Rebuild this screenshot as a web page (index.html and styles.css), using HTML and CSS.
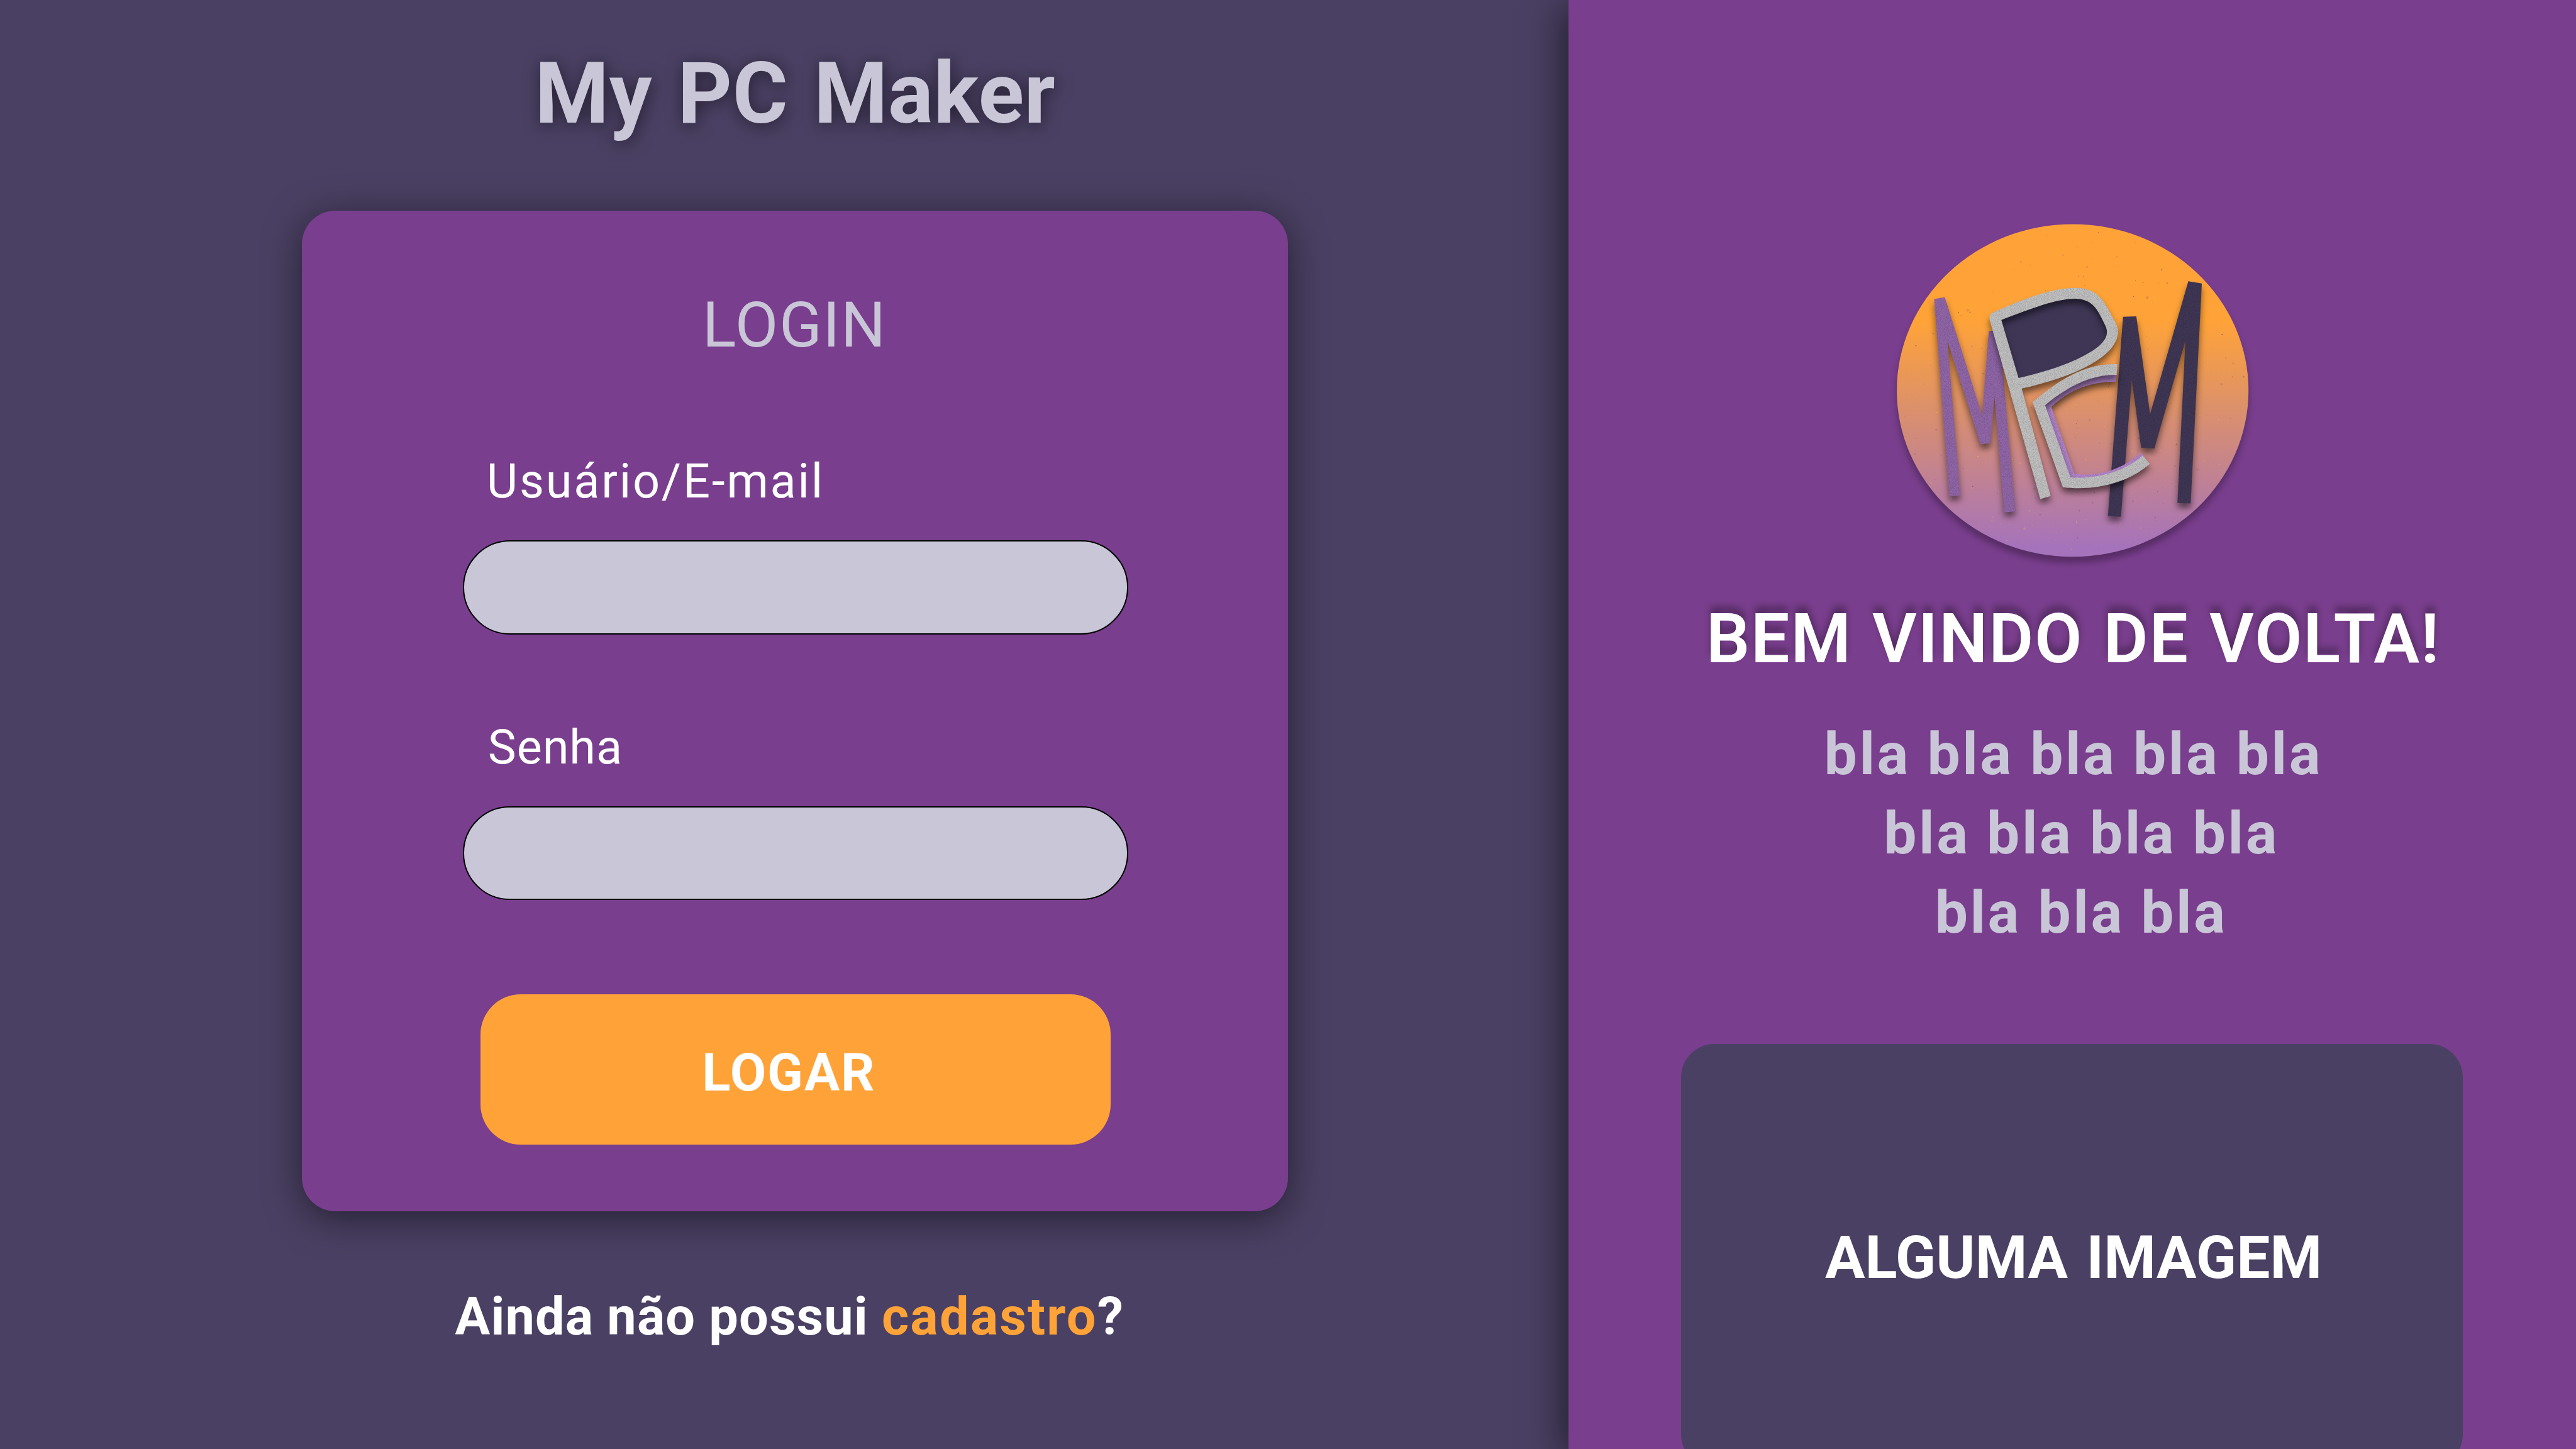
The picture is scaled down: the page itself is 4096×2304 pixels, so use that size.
FILE: index.html
```html
<!DOCTYPE html>
<html lang="pt-BR">
<head>
<meta charset="utf-8">
<title>My PC Maker</title>
<link rel="stylesheet" href="styles.css">
</head>
<body>
<main class="page">
  <section class="login">
    <h1 class="brand">My PC Maker</h1>
    <form class="card">
      <h2 class="card-title">LOGIN</h2>
      <label class="label label-user" for="user">Usuário/E-mail</label>
      <input class="field" id="user" type="text">
      <label class="label label-pass" for="pass">Senha</label>
      <input class="field" id="pass" type="password">
      <button class="submit" type="button">LOGAR</button>
    </form>
    <p class="signup">Ainda não possui <a class="signup-link">cadastro</a>?</p>
  </section>
  <aside class="welcome">
    <svg class="logo" viewBox="0 0 1568 1568" preserveAspectRatio="none" aria-label="MPCM">
      <defs>
        <linearGradient id="sky" x1="0" y1="94" x2="0" y2="1458" gradientUnits="userSpaceOnUse">
          <stop offset="0" stop-color="#ffa338"/>
          <stop offset=".29" stop-color="#ffa338"/>
          <stop offset=".97" stop-color="#a573bb"/>
          <stop offset="1" stop-color="#a573bb"/>
        </linearGradient>
        <filter id="discShadow" x="-10%" y="-10%" width="120%" height="120%" color-interpolation-filters="sRGB">
          <feDropShadow dx="0" dy="26" stdDeviation="12" flood-color="#000" flood-opacity=".27"/>
        </filter>
        <filter id="letter" x="-20%" y="-20%" width="140%" height="140%" color-interpolation-filters="sRGB">
          <feTurbulence type="fractalNoise" baseFrequency=".6" numOctaves="2" seed="4" result="n"/>
          <feColorMatrix in="n" type="matrix" values="0 0 0 0 0  0 0 0 0 0  0 0 0 0 0  .35 0 0 0 -.12" result="dark"/>
          <feComposite in="dark" in2="SourceAlpha" operator="in" result="grain"/>
          <feMerge result="body"><feMergeNode in="SourceGraphic"/><feMergeNode in="grain"/></feMerge>
          <feDropShadow in="body" dx="0" dy="20" stdDeviation="13" flood-color="#000" flood-opacity=".5"/>
        </filter>
        <clipPath id="disc"><ellipse cx="784" cy="776" rx="660" ry="679"/></clipPath>
      </defs>
      <ellipse cx="784" cy="776" rx="663" ry="682" fill="url(#sky)" filter="url(#discShadow)"/>
      <g id="specks" clip-path="url(#disc)"></g>
      <path filter="url(#letter)" fill="#9267a9" d="M262 401L302 393 443 880 468 531 508 531 567 1272 527 1275 489 800 474 992 437 997 312 574 360 1206 320 1210Z"/>
      <path filter="url(#letter)" fill="#403756" d="M974 474L1024 472 1076 873 1220 328 1271 337 1229 1239 1179 1237 1209 572 1092 1014 1042 1010 1007 732 966 1294 917 1291Z"/>
      <path fill="#3f3656" d="M500 475C640 420 720 385 790 385C870 385 895 445 925 515C935 580 880 625 800 660C730 695 650 720 570 740Z"/>
      <path filter="url(#letter)" fill="#c2c2c2" fill-rule="evenodd" d="M662 1221L471 486Q467 462 489 453C620 390 710 357 790 355C885 354 903 412 948 502C953 515 955 522 955 535C953 645 770 724 592 768L701 1209ZM515 487C640 435 720 402 790 400C862 400 878 445 908 512C928 560 890 602 800 648C730 683 650 708 580 725Z"/>
      <path filter="url(#letter)" fill="#b687d0" d="M950 700L947 740C850 738 770 775 704 843L791 1118C880 1132 970 1100 1040 1033L1055 1050C970 1125 870 1150 765 1145L668 832C750 755 850 695 950 700Z"/>
      <path filter="url(#letter)" fill="#c2c2c2" d="M952 668C830 662 730 735 633 824L747 1173C860 1188 990 1160 1075 1077L1048 1043C970 1115 870 1138 776 1133L680 836C760 765 850 709 950 712Z"/>
    </svg>
    <h2 class="greeting">BEM VINDO DE VOLTA!</h2>
    <div class="blurb">
      <p class="line line-1">bla bla bla bla bla</p>
      <p class="line line-2">bla bla bla bla</p>
      <p class="line line-3">bla bla bla</p>
    </div>
    <div class="picture"><span class="picture-text">ALGUMA IMAGEM</span></div>
  </aside>
</main>
<script src="specks.js"></script>
</body>
</html>
```
FILE: specks.js
```js
// Scatters paint specks over the logo disc, the same way on every load.
const group = document.getElementById('specks');
let seed = 7;
const rnd = () => (seed = (seed * 16807) % 2147483647) / 2147483647;
for (let i = 0; i < 900; i++) {
  const e = document.createElementNS('http://www.w3.org/2000/svg', 'ellipse');
  const r = 0.6 + Math.pow(rnd(), 4) * 2.4;
  e.setAttribute('cx', (120 + rnd() * 1328).toFixed(1));
  e.setAttribute('cy', (94 + rnd() * 1364).toFixed(1));
  e.setAttribute('rx', r.toFixed(1));
  e.setAttribute('ry', (r * (0.7 + rnd() * 0.7)).toFixed(1));
  const yellow = rnd() < 0.5;
  e.setAttribute('fill', r > 2 ? 'none' : yellow ? '#ffc23d' : '#6d4a5c');
  e.setAttribute('stroke', r > 2 ? (yellow ? '#ffc23d' : '#6d4a5c') : 'none');
  e.setAttribute('opacity', (0.4 + rnd() * 0.5).toFixed(2));
  group.appendChild(e);
}
```
FILE: styles.css
```css
*{box-sizing:border-box}
body{margin:0;font-family:Roboto,"Liberation Sans",sans-serif;background:#4a4063;overflow:hidden}
h1,h2,p{margin:0}
.page{display:flex;width:4096px;height:2304px;overflow:hidden;background:#4a4063}
.login{width:2494.4px;display:flex;flex-direction:column;align-items:flex-start;padding-top:82.4px}
.brand{margin-left:850.5px;font-size:134.5px;line-height:134.5px;font-weight:700;letter-spacing:.4px;word-spacing:7px;color:#c9c6d7;white-space:nowrap;text-shadow:2px 4px 27px rgba(0,0,0,.5)}
.card{display:flex;flex-direction:column;align-items:flex-start;width:1568px;height:1591.5px;margin:118px 0 0 480px;padding-top:133.2px;border-radius:53.3px;background:#793e8d;box-shadow:0 10.7px 58px rgba(0,0,0,.5)}
.card-title{margin-left:636.8px;font-size:99.7px;line-height:99.7px;font-weight:400;letter-spacing:1.5px;color:#c9c6d7}
.label{font-size:75.7px;line-height:75.7px;color:#fff;white-space:nowrap}
.label-user{margin:160px 0 0 294px;letter-spacing:2.8px}
.label-pass{margin:141.8px 0 0 295.8px;letter-spacing:.9px}
.field{width:1058.4px;height:149.3px;margin:56px 0 0 256px;padding:0 60px;border:2.67px solid #000;border-radius:75px;background:#c9c6d7;font:inherit;font-size:75px;outline:none}
.label-pass + .field{margin-top:55.6px}
.submit{width:1002px;height:239.5px;margin:149.5px 0 0 284px;padding:83.7px 0 0 352.2px;border:0;border-radius:64px;background:#ffa338;color:#fff;display:flex;align-items:flex-start;font:700 83.5px/83.5px Roboto,"Liberation Sans",sans-serif;letter-spacing:1.9px}
.signup{margin:126.2px 0 0 723.6px;font-size:82.9px;line-height:82.9px;font-weight:700;letter-spacing:1.1px;word-spacing:-.6px;color:#fff;white-space:nowrap}
.signup-link{color:#ffa338;letter-spacing:2.2px}
.welcome{width:1601.6px;height:2304px;display:flex;flex-direction:column;align-items:flex-start;padding-top:320px;background:#793e8d;box-shadow:-10.7px 10.7px 54px rgba(0,0,0,.5)}
.logo{flex:none;display:block;width:661.3px;height:608px;margin-left:470.9px;overflow:visible}
.greeting{margin:34.2px 0 0 218.5px;font-size:109px;line-height:109px;font-weight:600;letter-spacing:2px;word-spacing:3px;color:#fff;white-space:nowrap;text-shadow:0 -10.7px 10.7px rgba(0,0,0,.3)}
.blurb{margin-top:65.5px;font-size:93px;line-height:126px;font-weight:700;letter-spacing:3.5px;color:#c9c6d7;white-space:nowrap}
.line-1{margin-left:406.2px}
.line-2{margin-left:500.9px}
.line-3{margin-left:582.3px}
.picture{flex:none;width:1243.8px;height:674px;margin:145px 0 0 178.2px;padding:293.7px 0 0 229.4px;border-radius:53.3px;background:#4a4063}
.picture-text{display:block;font-size:94.5px;line-height:94.5px;font-weight:700;letter-spacing:.1px;word-spacing:6px;color:#fff;white-space:nowrap}
```
